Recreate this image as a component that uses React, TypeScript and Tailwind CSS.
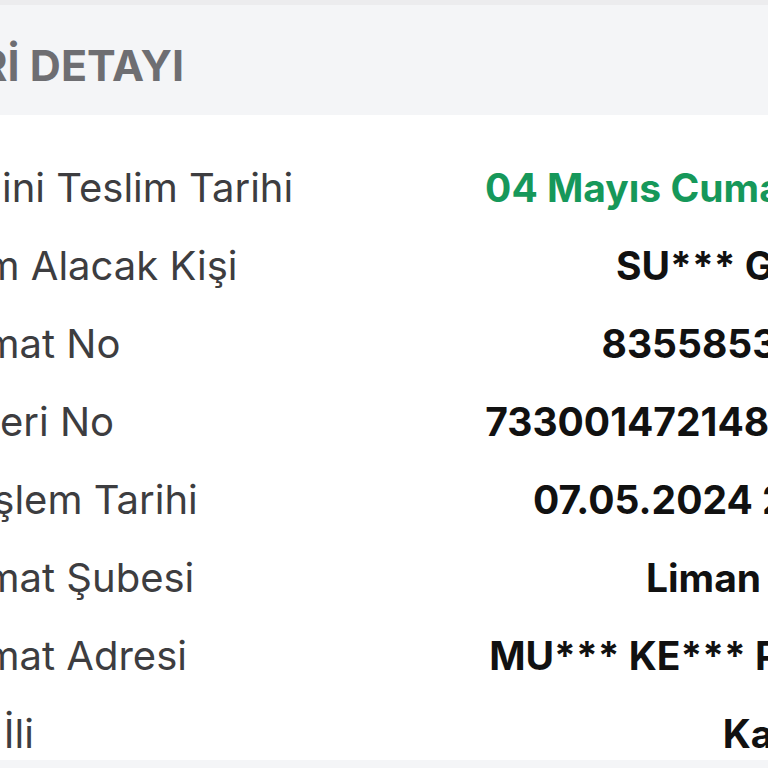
import React from "react";

const rows: { label: string; value: string; green?: boolean }[] = [
  { label: "Tahmini Teslim Tarihi", value: "04 Mayıs Cumartesi", green: true },
  { label: "Teslim Alacak Kişi", value: "SU*** GÜ***" },
  { label: "Teslimat No", value: "83558531476" },
  { label: "Gönderi No", value: "7330014721487306" },
  { label: "Son İşlem Tarihi", value: "07.05.2024 21:34" },
  { label: "Teslimat Şubesi", value: "Liman Şube" },
  { label: "Teslimat Adresi", value: "MU*** KE*** PA***" },
  { label: "Varış İli", value: "Kayseri" },
];

export default function App() {
  return (
    <div
      className="w-[768px] h-[768px] overflow-hidden bg-white"
      style={{ fontFamily: "Inter, 'Noto Sans', sans-serif" }}
    >
      <div className="-ml-[180px] w-[1048px] flex flex-col">
        <div className="h-[5px] bg-[#ececee]" />
        <div className="h-[110px] bg-[#f4f5f7] flex items-center pt-[10px] pl-[4px]">
          <span className="text-[43px] font-bold text-[#6e6e72] leading-none">GÖNDERİ DETAYI</span>
        </div>
        <div className="flex flex-col pt-[34px]">
          {rows.map((r) => (
            <div
              key={r.label}
              className="py-[19px] last:pb-[6px] flex items-center justify-between pl-[78px]"
            >
              <span className="text-[40px] text-[#3d3d40] leading-[40px]">{r.label}</span>
              <span
                className={
                  "text-[39px] font-bold leading-[40px] " +
                  (r.green ? "text-[#16985a]" : "text-[#111111]")
                }
              >
                {r.value}
              </span>
            </div>
          ))}
        </div>
        <div className="h-[40px] bg-[#f4f5f7]" />
      </div>
    </div>
  );
}
